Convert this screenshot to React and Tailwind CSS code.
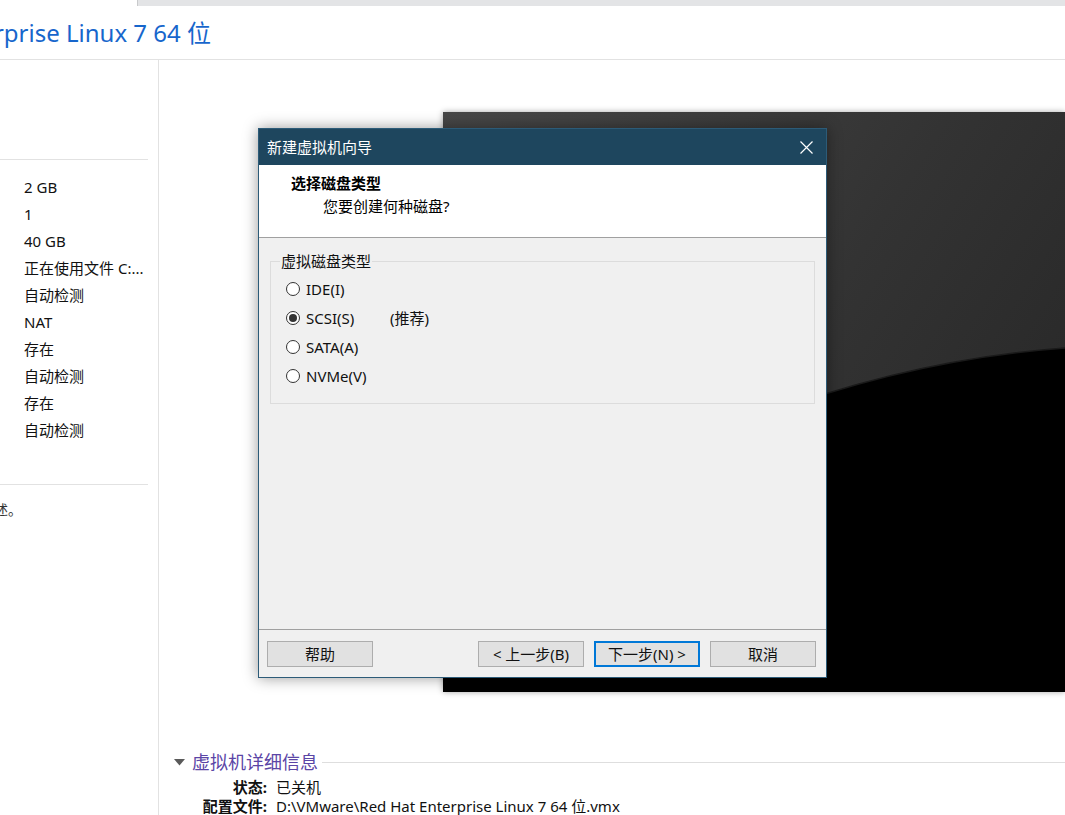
import React from 'react';

const hwRows = ['2 GB', '1', '40 GB', '正在使用文件 C:...', '自动检测', 'NAT', '存在', '自动检测', '存在', '自动检测'];

const diskTypes = [
    { label: 'IDE(I)', checked: false },
    { label: 'SCSI(S)', checked: true, note: '(推荐)' },
    { label: 'SATA(A)', checked: false },
    { label: 'NVMe(V)', checked: false },
];

const Radio = ({ checked }) => (
    <span className="w-[14px] h-[14px] rounded-full border border-[#333] bg-white flex items-center justify-center shrink-0">
        {checked && <span className="w-[8px] h-[8px] rounded-full bg-[#333]" />}
    </span>
);

const WizardButton = ({ children, focused }) => (
    <button
        className={`w-[106px] h-[26px] bg-[#e1e1e1] text-[15px] leading-[20px] text-[#111] flex items-center justify-center ${focused ? 'border-2 border-[#0078d7]' : 'border border-[#adadad]'}`}
    >
        {children}
    </button>
);

// the "new VM wizard" window floating over the console
const Wizard = () => (
    <div className="absolute left-[258px] top-[128px] w-[569px] h-[550px] border border-[#2c5b78] bg-[#f0f0f0] flex flex-col shadow-[0_0_14px_rgba(0,0,0,0.4)]">
        {/* Title bar */}
        <div className="h-[36px] bg-[#1e465e] flex items-center pl-[8px] pr-[13px] text-white text-[15px] leading-[20px]">
            <span className="flex-1">新建虚拟机向导</span>
            <svg width="13" height="13" viewBox="0 0 13 13">
                <path d="M0.5 0.5 L12.5 12.5 M12.5 0.5 L0.5 12.5" stroke="#fff" strokeWidth="1.2" fill="none" />
            </svg>
        </div>

        {/* Header */}
        <div className="h-[73px] bg-white border-b border-[#a0a0a0] pl-[32px] pt-[8px] text-[15px] leading-[20px] text-[#000]">
            <div className="font-bold">选择磁盘类型</div>
            <div className="pl-[32px] mt-[3px]">您要创建何种磁盘?</div>
        </div>

        {/* Body */}
        <div className="flex-1 px-[11px] pt-[23px]">
            <div className="h-[143px] border border-[#dcdcdc]">
                <div className="-mt-[11px] ml-[9px] px-[1px] w-fit bg-[#f0f0f0] text-[15px] leading-[20px] text-[#111]">虚拟磁盘类型</div>
                <div className="mt-[3px] pl-[15px]">
                    {diskTypes.map((d) => (
                        <div key={d.label} className="h-[29px] flex items-center gap-[6px] text-[15px] leading-[20px] text-[#111]">
                            <Radio checked={d.checked} />
                            <span className="w-[78px]">{d.label}</span>
                            {d.note && <span>{d.note}</span>}
                        </div>
                    ))}
                </div>
            </div>
        </div>

        {/* Footer */}
        <div className="h-[48px] border-t border-[#a0a0a0] pt-[11px] pl-[8px] pr-[10px] flex items-start">
            <WizardButton>帮助</WizardButton>
            <div className="flex-1" />
            <div className="flex gap-[10px]">
                <WizardButton>&lt; 上一步(B)</WizardButton>
                <WizardButton focused>下一步(N) &gt;</WizardButton>
                <WizardButton>取消</WizardButton>
            </div>
        </div>
    </div>
);

export default function App() {
    return (
        <div className="relative w-[1065px] h-[815px] overflow-hidden bg-white text-[#111] font-['Noto_Sans','Noto_Sans_CJK_SC',sans-serif]">
            {/* Tab strip */}
            <div className="flex h-[6px]">
                <div className="w-[137px]" />
                <div className="flex-1 bg-[#e3e4e6] border-l border-[#c9cacc]" />
            </div>

            {/* VM title */}
            <div className="h-[54px] border-b border-[#e2e2e2] flex items-center">
                <div className="w-[211px] overflow-hidden flex justify-end whitespace-nowrap">
                    <span className="text-[24px] leading-[32px] text-[#1766cc]">Red Hat Enterprise Linux 7 64 位</span>
                </div>
            </div>

            <div className="flex h-[755px]">
                {/* Hardware summary (left) */}
                <aside className="w-[159px] shrink-0 border-r border-[#e2e2e2] pr-[10px] pt-[99px]">
                    <div className="h-[325px] border-t border-[#e2e2e2] pt-[14px]">
                        {hwRows.map((r, i) => (
                            <div key={i} className="h-[27px] leading-[27px] pl-[24px] text-[15px] text-[#111] whitespace-nowrap">{r}</div>
                        ))}
                    </div>
                    <div className="border-t border-[#e2e2e2] pt-[15px]">
                        <div className="w-[22px] overflow-hidden flex justify-end whitespace-nowrap">
                            <span className="text-[14px] leading-[20px] text-[#333]">在此处键入对该虚拟机的描述。</span>
                        </div>
                    </div>
                </aside>

                {/* Console + details */}
                <main className="flex-1 flex flex-col">
                    <div className="mt-[52px] ml-[284px] h-[580px] shadow-[0_0_6px_rgba(0,0,0,0.35)]">
                        <svg width="622" height="580" viewBox="0 0 622 580" className="block">
                            <defs>
                                <linearGradient id="scr" x1="0" y1="0" x2="1" y2="0.6">
                                    <stop offset="0" stopColor="#474747" />
                                    <stop offset="0.6" stopColor="#333333" />
                                    <stop offset="1" stopColor="#282828" />
                                </linearGradient>
                            </defs>
                            <rect width="622" height="580" fill="url(#scr)" />
                            <path d="M0 480 Q300 260 622 236 L622 580 L0 580 Z" fill="#000" />
                            <path d="M0 480 Q300 260 622 236" stroke="#1a1a1a" strokeWidth="1.5" fill="none" />
                        </svg>
                    </div>

                    <section className="mt-[59px] pl-[15px]">
                        <div className="h-[22px] flex items-center">
                            <svg width="11" height="7" viewBox="0 0 11 7">
                                <path d="M0 0 L11 0 L5.5 6.5 Z" fill="#5a5a5a" />
                            </svg>
                            <span className="ml-[7px] text-[18px] leading-[22px] text-[#5b45a6]">虚拟机详细信息</span>
                            <div className="flex-1 ml-[4px] border-t border-[#dedede]" />
                        </div>
                        <div className="mt-[5px] text-[15px] leading-[19px]">
                            <div className="flex">
                                <span className="w-[93px] text-right font-bold">状态:</span>
                                <span className="ml-[9px]">已关机</span>
                            </div>
                            <div className="flex">
                                <span className="w-[93px] text-right font-bold">配置文件:</span>
                                <span className="ml-[9px] whitespace-nowrap">D:\VMware\Red Hat Enterprise Linux 7 64 位.vmx</span>
                            </div>
                        </div>
                    </section>
                </main>
            </div>

            <Wizard />
        </div>
    );
}
